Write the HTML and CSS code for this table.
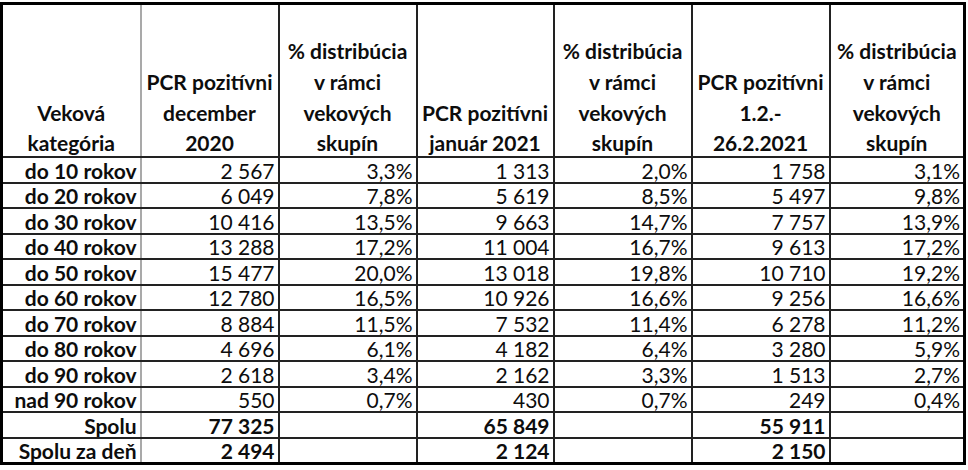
FILE: index.html
```html
<!DOCTYPE html>
<html lang="sk">
<head>
<meta charset="utf-8">
<title>PCR pozitívni podľa vekových kategórií</title>
<link rel="stylesheet" href="styles.css">
</head>
<body>
<table class="sheet">
  <colgroup>
    <col class="c1"><col class="c2"><col class="c3"><col class="c4"><col class="c5"><col class="c6"><col class="c7">
  </colgroup>
  <thead>
    <tr class="head">
      <th class="first"><div class="hd">Veková<br>kategória</div></th>
      <th><div class="hd">PCR pozitívni<br>december<br>2020</div></th>
      <th><div class="hd">% distribúcia<br>v rámci<br>vekových<br>skupín</div></th>
      <th><div class="hd">PCR pozitívni<br>január 2021</div></th>
      <th><div class="hd">% distribúcia<br>v rámci<br>vekových<br>skupín</div></th>
      <th><div class="hd">PCR pozitívni<br>1.2.-<br>26.2.2021</div></th>
      <th><div class="hd">% distribúcia<br>v rámci<br>vekových<br>skupín</div></th>
    </tr>
  </thead>
  <tbody>
    <tr><th class="first">do 10 rokov</th><td>2 567</td><td>3,3%</td><td>1 313</td><td>2,0%</td><td>1 758</td><td>3,1%</td></tr>
    <tr><th class="first">do 20 rokov</th><td>6 049</td><td>7,8%</td><td>5 619</td><td>8,5%</td><td>5 497</td><td>9,8%</td></tr>
    <tr><th class="first">do 30 rokov</th><td>10 416</td><td>13,5%</td><td>9 663</td><td>14,7%</td><td>7 757</td><td>13,9%</td></tr>
    <tr><th class="first">do 40 rokov</th><td>13 288</td><td>17,2%</td><td>11 004</td><td>16,7%</td><td>9 613</td><td>17,2%</td></tr>
    <tr><th class="first">do 50 rokov</th><td>15 477</td><td>20,0%</td><td>13 018</td><td>19,8%</td><td>10 710</td><td>19,2%</td></tr>
    <tr><th class="first">do 60 rokov</th><td>12 780</td><td>16,5%</td><td>10 926</td><td>16,6%</td><td>9 256</td><td>16,6%</td></tr>
    <tr><th class="first">do 70 rokov</th><td>8 884</td><td>11,5%</td><td>7 532</td><td>11,4%</td><td>6 278</td><td>11,2%</td></tr>
    <tr><th class="first">do 80 rokov</th><td>4 696</td><td>6,1%</td><td>4 182</td><td>6,4%</td><td>3 280</td><td>5,9%</td></tr>
    <tr><th class="first">do 90 rokov</th><td>2 618</td><td>3,4%</td><td>2 162</td><td>3,3%</td><td>1 513</td><td>2,7%</td></tr>
    <tr><th class="first">nad 90 rokov</th><td>550</td><td>0,7%</td><td>430</td><td>0,7%</td><td>249</td><td>0,4%</td></tr>
    <tr class="total"><th class="first">Spolu</th><td>77 325</td><td></td><td>65 849</td><td></td><td>55 911</td><td></td></tr>
    <tr class="total"><th class="first">Spolu za deň</th><td>2 494</td><td></td><td>2 124</td><td></td><td>2 150</td><td></td></tr>
  </tbody>
</table>
</body>
</html>
```
FILE: styles.css
```css
html, body {
  margin: 0;
  padding: 0;
  background: #ffffff;
}

body {
  padding-top: 2px;
  font-family: Lato, "Liberation Sans", sans-serif;
  color: #0d0d0d;
}

.sheet {
  border-collapse: collapse;
  table-layout: fixed;
  width: 966px;
  border: 3px solid #000000;
  font-size: 21px;
}

.c1 { width: 139px; }
.c2 { width: 138px; }
.c3 { width: 138px; }
.c4 { width: 137px; }
.c5 { width: 138px; }
.c6 { width: 138px; }
.c7 { width: 135px; }

.sheet th,
.sheet td {
  border: 2px solid #222222;
  padding: 0 3px 0 0;
  white-space: nowrap;
  overflow: hidden;
}

.sheet .first {
  border-right: 2px solid #a9a9a9;
  text-align: right;
  font-weight: 700;
}

.head th {
  height: 151px;
  vertical-align: bottom;
  text-align: center;
  font-weight: 700;
  padding: 0;
}

.head th.first {
  text-align: center;
}

.hd {
  line-height: 30.7px;
  margin-bottom: -3px;
}

tbody th,
tbody td {
  height: 23.5px;
  line-height: 23px;
  vertical-align: bottom;
  text-align: right;
  font-weight: 400;
}

.total td {
  font-weight: 700;
}
```
